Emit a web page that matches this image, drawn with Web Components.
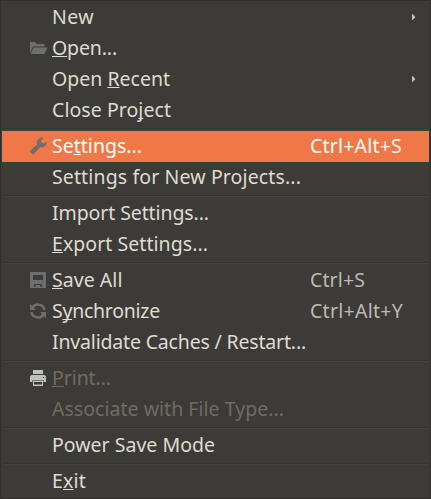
<!DOCTYPE html>
<html lang="en">
<head>
<meta charset="utf-8">
<title>File menu</title>
<style>
html,body{margin:0;height:100%;background:#3c3b37}
body{font-family:"Noto Sans","Open Sans",sans-serif;font-size:19.5px}
</style>
</head>
<body>
<script>
const icons = {
  open: '<path d="M1 14V3h5l1.5 2H15.500v2.500H4z"/><path d="M4.8 8.500H18.500L15.300 15H1.4z"/>',
  wrench: '<path d="M.6 14.300 8 7.800C7.200 5 8.300 2 11 .9c1.200-.5 2.500-.5 3.500-.1L12 3.500l.6 2.400 2.500.6L17.600 4c.5 2.600-.6 5.100-3 6.100-1.100.5-2.400.5-3.400.2L4 17.700z"/>',
  save: '<path fill-rule="evenodd" d="M1 1h16v16H1zM4 4v5h10V4zM5 13v3h8v-3z"/><path d="M6.500 14h5v2.200h-5z"/>',
  sync: '<path fill="none" stroke="currentColor" stroke-width="2.600" d="M3.300 5.800A6.700 6.700 0 0 1 15.600 8M14.700 12.200A6.700 6.700 0 0 1 2.400 10"/><path d="M1 2v6h6zM17 16v-6h-6z"/>',
  print: '<path d="M4 1h10v4H4z"/><path fill-rule="evenodd" d="M2.300 6h13.400L17 7.500V13h-2.500v-2h-11v2H1V7.500zM14 8v1h1V8z"/><path fill-rule="evenodd" d="M4 11.500h10V17H4zM5 13v2.500h8V13z"/>'
};

class MenuIcon extends HTMLElement {
  connectedCallback() {
    this.attachShadow({mode:'open'}).innerHTML = `
      <style>:host{display:block;width:18px;height:18px}svg{display:block;fill:currentColor;overflow:visible}</style>
      <svg width="18" height="18" viewBox="0 0 18 18">${icons[this.getAttribute('name')] || ''}</svg>`;
  }
}

/* Text run spaced evenly to fill the width given in its "fit" attribute. */
class FitText extends HTMLElement {
  connectedCallback() {
    this.attachShadow({mode:'open'}).innerHTML =
      '<style>:host{display:inline-block;white-space:nowrap}</style><slot></slot>';
    const count = this.textContent.length;
    const gap = Number(this.getAttribute('fit')) - this.getBoundingClientRect().width;
    this.style.letterSpacing = (gap / count) + 'px';
  }
}

class MenuItem extends HTMLElement {
  connectedCallback() {
    const a = n => this.getAttribute(n);
    this.attachShadow({mode:'open'}).innerHTML = `
      <style>
        :host{display:grid;grid-template-columns:18px 263px 1fr 3px;height:31px;
          padding:0 14px 0 27px;line-height:31px;color:#dfdbd2;box-sizing:border-box}
        menu-icon{color:#6e6e6e;align-self:center;margin-top:-1px}
        .label{padding-left:5px}
        .label,.keys{margin-top:-1px}
        .keys{color:#bdbab2}
        :host([selected]){background:#f07746;color:#fff}
        :host([selected]) .keys{color:#fff}
        :host([disabled]){color:#706c61}
        :host([disabled]) menu-icon{color:#c0c0c0}
        .arrow{align-self:center;width:3px;height:7px;margin-top:-1px;background:#c4c1ba;
          clip-path:polygon(0 0,100% 43%,100% 57%,0 100%)}
      </style>
      <menu-icon name="${a('icon') || ''}"></menu-icon>
      <div class="label"><slot></slot></div>
      <div class="keys"><slot name="keys"></slot></div>
      ${this.hasAttribute('submenu') ? '<div class="arrow"></div>' : ''}`;
  }
}

class MenuSeparator extends HTMLElement {
  connectedCallback() {
    this.attachShadow({mode:'open'}).innerHTML = `
      <style>:host{display:block;height:5px;padding:2px 1px 0;box-sizing:border-box}
      div{height:1px;background:#353430;border-bottom:1px solid #43423e}</style><div></div>`;
  }
}

class FileMenu extends HTMLElement {
  connectedCallback() {
    this.attachShadow({mode:'open'}).innerHTML = `
      <style>
        :host{display:block;width:431px;height:499px;box-sizing:border-box;padding:1px;
          border:1px solid #302f2c;background:#3c3b37}
        u{text-decoration:underline 1px;text-underline-offset:1px;text-decoration-skip-ink:none}
      </style>
      <menu-item submenu><fit-text fit="42">New</fit-text></menu-item>
      <menu-item icon="open"><fit-text fit="65"><u>O</u>pen...</fit-text></menu-item>
      <menu-item submenu><fit-text fit="118">Open <u>R</u>ecent</fit-text></menu-item>
      <menu-item><fit-text fit="119">Close Pro<u>j</u>ect</fit-text></menu-item>
      <menu-separator></menu-separator>
      <menu-item icon="wrench" selected><fit-text fit="90">Se<u>t</u>tings...</fit-text><fit-text slot="keys" fit="92">Ctrl+Alt+S</fit-text></menu-item>
      <menu-item><fit-text fit="249">Settings for New Projects...</fit-text></menu-item>
      <menu-separator></menu-separator>
      <menu-item><fit-text fit="157">Import Settings...</fit-text></menu-item>
      <menu-item><fit-text fit="156"><u>E</u>xport Settings...</fit-text></menu-item>
      <menu-separator></menu-separator>
      <menu-item icon="save"><fit-text fit="70.5"><u>S</u>ave All</fit-text><fit-text slot="keys" fit="55">Ctrl+S</fit-text></menu-item>
      <menu-item icon="sync"><fit-text fit="108">S<u>y</u>nchronize</fit-text><fit-text slot="keys" fit="93">Ctrl+Alt+Y</fit-text></menu-item>
      <menu-item><fit-text fit="254">Invalidate Caches / Restart...</fit-text></menu-item>
      <menu-separator></menu-separator>
      <menu-item icon="print" disabled><fit-text fit="59"><u>P</u>rint...</fit-text></menu-item>
      <menu-item disabled><fit-text fit="232">Associate with File Type...</fit-text></menu-item>
      <menu-separator></menu-separator>
      <menu-item><fit-text fit="163">Power Save Mode</fit-text></menu-item>
      <menu-separator></menu-separator>
      <menu-item><fit-text fit="34">E<u>x</u>it</fit-text></menu-item>`;
  }
}

customElements.define('menu-icon', MenuIcon);
customElements.define('menu-separator', MenuSeparator);
customElements.define('menu-item', MenuItem);
customElements.define('fit-text', FitText);
customElements.define('file-menu', FileMenu);
document.body.append(document.createElement('file-menu'));
</script>
</body>
</html>
